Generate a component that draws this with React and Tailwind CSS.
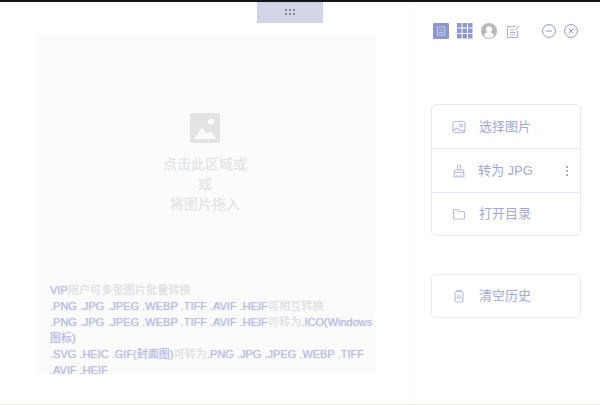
const font = { fontFamily: '"Liberation Sans","Noto Sans CJK SC",sans-serif' };
const B = ({ children }) => <span className="text-[#b7bde0] text-[11px] [text-shadow:0_0_1px_#c4c9e6]">{children}</span>;
const G = ({ children }) => <span className="text-[#dfdfe2] text-[11.200px] [text-shadow:0_0_1px_#e6e6e8]">{children}</span>;
const S = "#b9bfdf";

function Row({ icon, label, more, gap = "gap-[13px]", h = "h-[43px]", top }) {
  return (
    <div className={`${h} flex items-center pl-[20px] pr-[10px] ${top ? "border-t border-[#e6e7f3]" : ""}`}>
      <div className={`flex items-center ${gap} flex-1 text-[13px] text-[#a2a9d3]`}>
        {icon}
        <span>{label}</span>
      </div>
      {more && (
        <svg width="4" height="12" viewBox="0 0 4 12" className="mr-[1px]">
          <circle cx="2" cy="2" r="1" fill="#8d93ad" />
          <circle cx="2" cy="6" r="1" fill="#8d93ad" />
          <circle cx="2" cy="10" r="1" fill="#8d93ad" />
        </svg>
      )}
    </div>
  );
}

const Img = () => (
  <svg width="14" height="14" viewBox="0 0 14 14" fill="none" stroke={S} strokeWidth="1.2">
    <rect x="1" y="1.500" width="12" height="11" rx="2" />
    <circle cx="9" cy="5.500" r="1.400" />
    <path d="M1 10.500 5 8l3 2.500h5" />
  </svg>
);
const Brush = () => (
  <svg width="14" height="14" viewBox="0 0 14 14" fill="none" stroke={S} strokeWidth="1.2">
    <path d="M5.500 6V2.500a1.500 1.500 0 0 1 3 0V6" />
    <path d="M3 6h8l.8 2.500H2.200Z" />
    <path d="M2.200 8.500v4.500h9.600V8.500M5 13v-2M9 13v-2" />
  </svg>
);
const Folder = () => (
  <svg width="14" height="14" viewBox="0 0 14 14" fill="none" stroke={S} strokeWidth="1.2">
    <path d="M1.500 3.500a1 1 0 0 1 1-1h3l1.500 2h4.500a1 1 0 0 1 1 1v5.500a1 1 0 0 1-1 1h-9a1 1 0 0 1-1-1Z" />
  </svg>
);
const Trash = () => (
  <svg width="14" height="14" viewBox="0 0 14 14" fill="none" stroke={S} strokeWidth="1.200">
    <path d="M5 2.500V1.500h4v1" />
    <rect x="3" y="2.500" width="8" height="10.500" rx="2" />
    <path d="M5.800 6v4M8.200 6v4" />
  </svg>
);

export default function App() {
  return (
    <div className="relative w-[600px] h-[405px] bg-white overflow-hidden flex flex-col" style={font}>
      <div className="h-[2px] bg-[#15151c] shrink-0" />
      <div className="absolute left-[257px] top-[2px] w-[66px] h-[21px] bg-[#d3d6e9] border border-dotted border-[#c2c5dc] flex items-center justify-center">
        <svg width="12" height="7" viewBox="0 0 12 7" fill="#85889e">
          <rect x="1" y="0" width="2" height="2" /><rect x="5" y="0" width="2" height="2" /><rect x="9" y="0" width="2" height="2" />
          <rect x="1" y="4" width="2" height="2" /><rect x="5" y="4" width="2" height="2" /><rect x="9" y="4" width="2" height="2" />
        </svg>
      </div>
      <div className="flex flex-1 min-h-0 border-b border-[#e6e7f1]">
        <div className="w-[410px] shrink-0 border-r border-[#f8f8fb] pl-[35px] pt-[32px]">
          <div className="w-[340px] h-[340px] bg-[#fbfbfc] overflow-hidden flex flex-col">
            <div className="flex flex-col items-center pt-[79px]">
              <svg width="30" height="30" viewBox="0 0 30 30">
                <rect width="30" height="30" rx="3" fill="#e3e3e5" />
                <circle cx="21" cy="8.500" r="3" fill="#fbfbfc" />
                <path d="M4 26 12 14.500 17.500 21 20.500 18 26.500 26Z" fill="#fbfbfc" />
              </svg>
              <div className="mt-[11px] text-[14px] leading-[20px] font-medium text-[#e4e4e6] text-center">
                <div>点击此区域或</div>
                <div>或</div>
                <div>将图片拖入</div>
              </div>
            </div>
            <div className="mt-[68px] pl-[15px] pr-[1px] text-[11.200px] leading-[16px]">
              <div className="h-[16px]"><B>VIP</B><G>用户可多张图片批量转换</G></div>
              <div className="h-[16px]"><B>.PNG .JPG .JPEG .WEBP .TIFF .AVIF .HEIF</B><G>可相互转换</G></div>
              <div><B>.PNG .JPG .JPEG .WEBP .TIFF .AVIF .HEIF</B><G>可转为</G><B>.ICO(Windows图标)</B></div>
              <div><B>.SVG .HEIC .GIF(封面图)</B><G>可转为</G><B>.PNG .JPG .JPEG .WEBP .TIFF .AVIF .HEIF</B></div>
            </div>
          </div>
        </div>
        <div className="flex-1 pl-[21px] pr-[19px]">
          <div className="flex items-center h-[16px] mt-[21px] pl-[2px]">
            <div className="w-[16px] h-[16px] rounded-[1px] bg-[#8d98cf] flex items-center justify-center">
              <svg width="10" height="10" viewBox="0 0 10 10" fill="none" stroke="#c3c9e6" strokeWidth="1">
                <rect x="1.500" y="1" width="7" height="8" /><path d="M3 4h4M3 6.500h4" />
              </svg>
            </div>
            <svg width="16" height="16" viewBox="0 0 16 16" fill="#8d98cf" className="ml-[8px]">
              {[0, 5.500, 11].flatMap((y) => [0, 5.500, 11].map((x) => <rect key={`${x}-${y}`} x={x} y={y} width="4.500" height="4.500" />))}
            </svg>
            <svg width="16" height="16" viewBox="0 0 16 16" className="ml-[8px]">
              <circle cx="8" cy="8" r="8" fill="#b8b8ba" />
              <circle cx="8" cy="6.200" r="3" fill="#fff" />
              <path d="M3 13c.5-3 2.500-4 5-4s4.500 1 5 4a7 7 0 0 1-10 0Z" fill="#fff" />
            </svg>
            <svg width="15" height="15" viewBox="0 0 15 15" fill="none" stroke="#a9b1da" strokeWidth="1" className="ml-[9px]">
              <path d="M11.500 6.500v7h-10v-11h8M4 6h4M4 8.500h5M4 11h5" />
              <path d="M9 6 13.500 1.500" />
            </svg>
            <svg width="14" height="14" viewBox="0 0 14 14" fill="none" stroke="#8d98cf" strokeWidth="1" className="ml-[21px]">
              <circle cx="7" cy="7" r="6.400" /><path d="M4 7h6" />
            </svg>
            <svg width="14" height="14" viewBox="0 0 14 14" fill="none" stroke="#8d98cf" strokeWidth="1" className="ml-[8px]">
              <circle cx="7" cy="7" r="6.400" /><path d="m4.700 4.700 4.600 4.600M9.300 4.700l-4.600 4.600" />
            </svg>
          </div>
          <div className="mt-[65px] w-[150px] border border-[#e6e7f3] rounded-[5px]">
            <Row icon={<Img />} label="选择图片" />
            <Row icon={<Brush />} label="转为 JPG" gap="gap-[12px]" h="h-[44px]" more top />
            <Row icon={<Folder />} label="打开目录" top />
          </div>
          <div className="mt-[38px] w-[150px] border border-[#e6e7f3] rounded-[5px]">
            <Row icon={<Trash />} label="清空历史" h="h-[42px]" />
          </div>
        </div>
      </div>
    </div>
  );
}
